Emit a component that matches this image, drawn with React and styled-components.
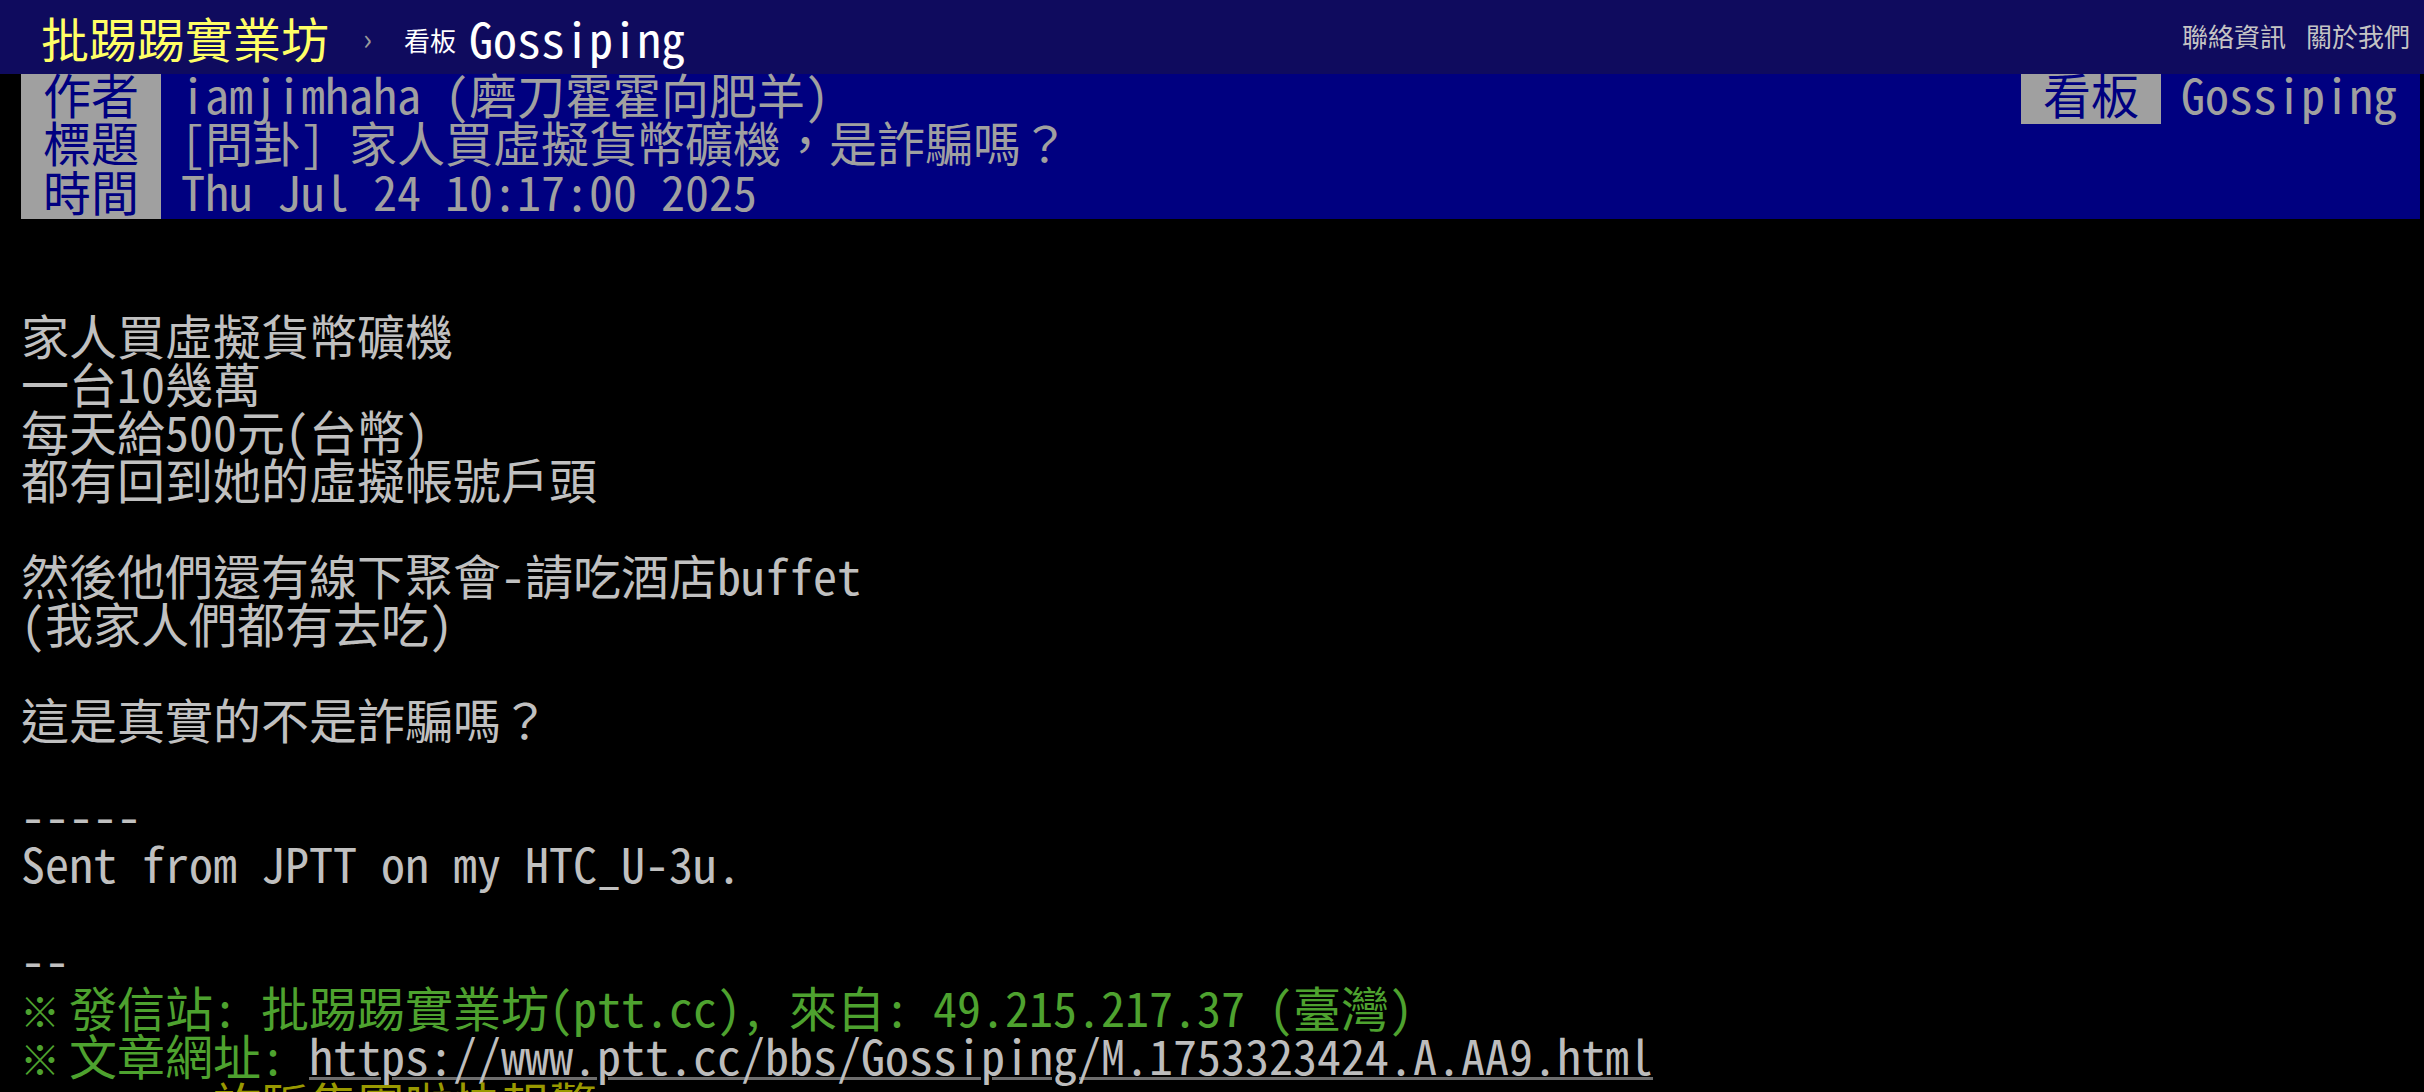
import React from 'react';
import styled, { createGlobalStyle } from 'styled-components';

const MONO = `"Noto Sans Mono CJK TC", "Noto Sans CJK TC", "DejaVu Sans Mono", monospace`;
const SANS = `"Noto Sans CJK TC", "Noto Sans", sans-serif`;

const Global = createGlobalStyle`
  html, body { margin: 0; padding: 0; background: #000; overflow: hidden; }
  body { font-family: ${MONO}; }
`;

const Topbar = styled.header`
  height: 74px;
  background: #0f0b5e;
  display: flex;
  align-items: center;
  padding: 0 14px 0 41px;
  box-sizing: border-box;
`;

const Logo = styled.a`
  font-family: ${SANS};
  font-size: 48px;
  line-height: 74px;
  color: #ffff66;
  text-decoration: none;
`;

const Chevron = styled.span`
  font-family: ${SANS};
  font-size: 30px;
  color: #9a9a9a;
  margin: 0 32px 0 34px;
`;

const BoardLabel = styled.span`
  font-family: ${SANS};
  font-size: 26px;
  color: #fff;
  margin-right: 13px;
  padding-top: 4px;
`;

const BoardName = styled.a`
  font-family: ${MONO};
  font-size: 48px;
  color: #fff;
  text-decoration: none;
`;

const Spacer = styled.div`
  flex: 1;
`;

const NavLink = styled.a`
  font-family: ${SANS};
  font-size: 26px;
  color: #c4c4c4;
  text-decoration: none;
  margin-left: 20px;
  margin-bottom: 4px;
`;

const Main = styled.main`
  margin: 0 4px 0 21px;
  font-size: 48px;
  line-height: 48px;
  color: #c0c0c0;
`;

const Meta = styled.section`
  background: #000080;
`;

const MetaRow = styled.div`
  display: flex;
  align-items: flex-start;
  height: 48.33px;
  line-height: 39px;
`;

const Tag = styled.span`
  flex: none;
  width: 140px;
  text-align: center;
  background: #a0a0a0;
  color: #000080;
  height: ${p => (p.$right ? '50px' : '48.33px')};
`;

const Value = styled.span`
  flex: ${p => (p.$grow ? 1 : 'none')};
  padding: 0 ${p => (p.$right ? '23px' : '0')} 0 20px;
  color: #a0a0a0;
  white-space: pre;
`;

const Body = styled.div`
  white-space: pre;
  margin-top: -5px;
`;

const Green = styled.span`
  color: #4ea22f;
`;

const RefMark = styled.span`
  display: inline-block;
  width: 25px;
  margin-left: -1px;
  font-size: 40px;
  line-height: 40px;
  vertical-align: baseline;
  white-space: nowrap;
`;

const Url = styled.a`
  color: #bdbdbd;
  text-decoration: underline;
  text-decoration-color: #6e6e6e;
  text-decoration-thickness: 3px;
`;

const PushTag = styled.span`
  color: #ff6666;
`;
const PushUser = styled.span`
  color: #ffff66;
`;
const PushContent = styled.span`
  color: #999900;
`;

export default function App() {
  return (
    <>
      <Global />
      <Topbar>
        <Logo>批踢踢實業坊</Logo>
        <Chevron>›</Chevron>
        <BoardLabel>看板</BoardLabel>
        <BoardName>Gossiping</BoardName>
        <Spacer />
        <NavLink>聯絡資訊</NavLink>
        <NavLink>關於我們</NavLink>
      </Topbar>
      <Main>
        <Meta>
          <MetaRow>
            <Tag>作者</Tag>
            <Value $grow>iamjimhaha (磨刀霍霍向肥羊)</Value>
            <Tag $right>看板</Tag>
            <Value $right>Gossiping</Value>
          </MetaRow>
          <MetaRow>
            <Tag>標題</Tag>
            <Value $grow>[問卦] 家人買虛擬貨幣礦機，是詐騙嗎？</Value>
          </MetaRow>
          <MetaRow>
            <Tag>時間</Tag>
            <Value $grow>Thu Jul 24 10:17:00 2025</Value>
          </MetaRow>
        </Meta>
        <Body>
          {'\n\n家人買虛擬貨幣礦機\n一台10幾萬\n每天給500元(台幣)\n都有回到她的虛擬帳號戶頭\n\n然後他們還有線下聚會-請吃酒店buffet\n(我家人們都有去吃)\n\n這是真實的不是詐騙嗎？\n\n-----\nSent from JPTT on my HTC_U-3u.\n\n--\n'}
          <Green><RefMark>※</RefMark> 發信站: 批踢踢實業坊(ptt.cc), 來自: 49.215.217.37 (臺灣)</Green>
          {'\n'}
          <Green><RefMark>※</RefMark> 文章網址: </Green>
          <Url>https://www.ptt.cc/bbs/Gossiping/M.1753323424.A.AA9.html</Url>
          {'\n'}
          <PushTag>→ </PushTag>
          <PushUser>sun</PushUser>
          <PushContent>: 詐騙集團啦快報警</PushContent>
          {'\n'}
        </Body>
      </Main>
    </>
  );
}
